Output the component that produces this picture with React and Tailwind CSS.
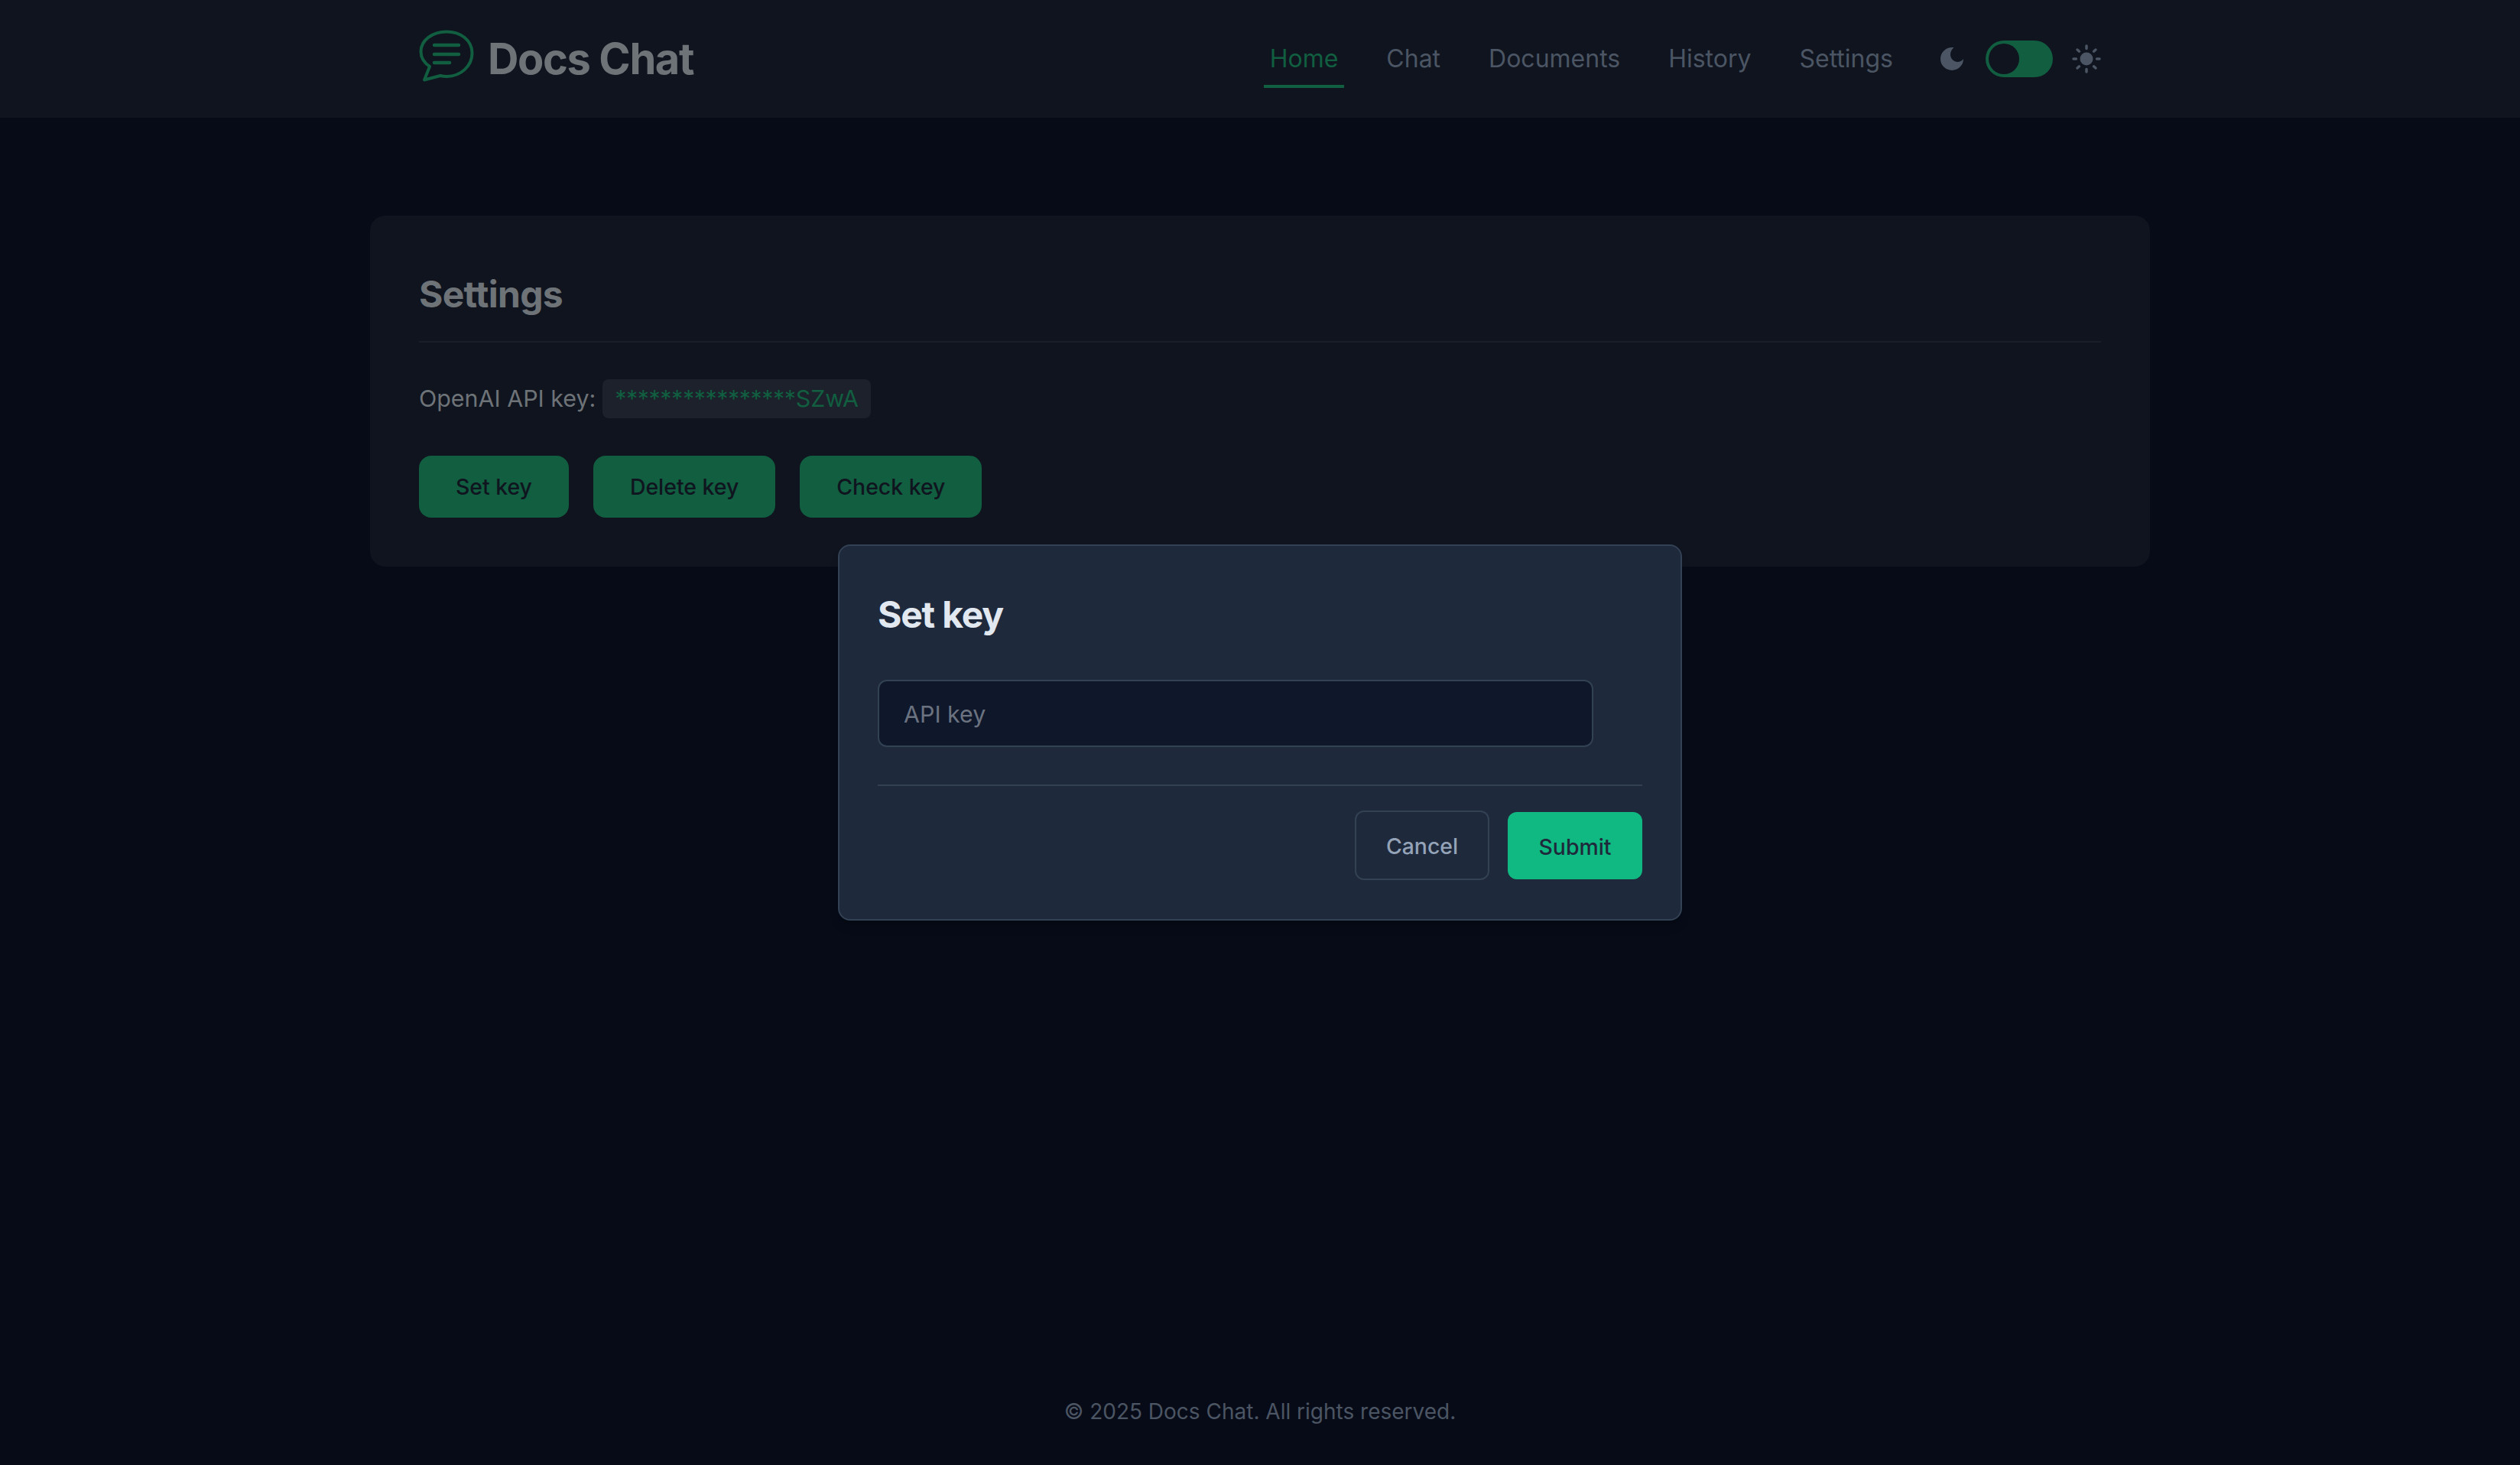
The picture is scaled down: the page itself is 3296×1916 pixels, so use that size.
import React from "react";

const Logo = () => (
  <svg width="72" height="68" viewBox="0 0 72 68" fill="none" stroke="#115e40" strokeLinecap="round" strokeLinejoin="round">
    <path strokeWidth="4" d="M36 2.500C17.500 2.500 2.500 13.500 2.500 28.500c0 8 4 14.500 11.500 19.500L7 65.500l21-5.500c2.500.6 5.500.900 8.500.900C55 60.900 69.500 47 69.500 30.500 69.500 14 55 2.500 36 2.500Z" />
    <path strokeWidth="4.500" d="M20 20h32M20 32h32M20 43h20" />
  </svg>
);

const Moon = () => (
  <svg width="30" height="30" viewBox="0 0 30 30" fill="#4b5563">
    <path d="M15 0a15 15 0 1 0 15 15c-1.800 2.600-4.600 4-7.500 4C17.500 19 13 14.500 13 9.500 13 5.800 14.800 2 17.500.2 16.700.1 15.800 0 15 0Z" />
  </svg>
);

const Sun = () => (
  <svg width="38" height="38" viewBox="0 0 38 38" fill="#4b5563" stroke="#4b5563" strokeLinecap="round">
    <circle cx="19" cy="19" r="8.500" stroke="none" />
    <path strokeWidth="3.500" fill="none" d="M19 2v3.500M19 32.500V36M2 19h3.500M32.500 19H36M7 7l2.500 2.200M28.500 28.800 31 31M7 31l2.500-2.200M28.500 9.200 31 7" />
  </svg>
);

const navItems = ["Home", "Chat", "Documents", "History", "Settings"];

export default function App() {
  return (
    <div className="relative flex h-[1916px] flex-col bg-[#070b17] font-['Inter',sans-serif] text-[#6e7378]">
      <header className="flex h-[154px] shrink-0 items-center justify-center bg-[#0f141f]">
        <div className="flex w-[2200px] items-center justify-between">
          <div className="flex items-center gap-[18px]">
            <div className="mb-2">
              <Logo />
            </div>
            <span className="text-[56px] font-bold leading-none tracking-tight text-[#6e7378]">Docs Chat</span>
          </div>
          <div className="flex items-center">
            <nav className="flex items-center gap-[47px]">
              {navItems.map((item, i) => (
                <a
                  key={item}
                  className={
                    i === 0
                      ? "border-b-4 border-[#115e40] px-2 pb-2.5 pt-3.5 text-[32px] leading-[48px] text-[#115e40]"
                      : "border-b-4 border-transparent px-2 pb-2.5 pt-3.5 text-[32px] leading-[48px] text-[#4b5563]"
                  }
                >
                  {item}
                </a>
              ))}
            </nav>
            <div className="ml-[54px] flex items-center">
              <Moon />
              <div className="ml-[29px] flex h-12 w-[88px] items-center rounded-full bg-[#115e40] pl-1">
                <div className="h-10 w-10 rounded-full bg-[#0f141f]" />
              </div>
              <div className="ml-[25px]">
                <Sun />
              </div>
            </div>
          </div>
        </div>
      </header>

      <main className="flex flex-1 flex-col items-center pt-[128px]">
        <section className="w-[2328px] rounded-[20px] bg-[#0f141f] p-16">
          <h1 className="border-b-2 border-[#1a1f29] pb-[23px] pt-px text-[48px] font-bold leading-[76px] tracking-[-0.7px] text-[#6e7378]">Settings</h1>
          <div className="mt-12 flex items-center gap-[9px] text-[30.4px] leading-[51px]">
            <span>OpenAI API key:</span>
            <code className="rounded-lg bg-[#1c212b] px-4 font-['Inter',sans-serif] text-[#115e40]">
              <span className="tracking-[-0.45px]">****************</span>SZwA
            </code>
          </div>
          <div className="mt-[49px] flex gap-8">
            {["Set key", "Delete key", "Check key"].map((b) => (
              <button key={b} className="h-[81px] rounded-2xl bg-[#115e40] px-12 pt-0.5 text-[28.4px] font-medium text-[#0f141f]">
                {b}
              </button>
            ))}
          </div>
        </section>
      </main>

      <footer className="flex h-[142px] shrink-0 items-center justify-center pt-0.5 text-[28px] text-[#4b5563]">
        © 2025 Docs Chat. All rights reserved.
      </footer>

      <div className="absolute left-[1096px] top-[712px] w-[1104px] rounded-2xl border-2 border-[#334155] bg-[#1e293b] px-[50px] pb-[50px] pt-[54px] shadow-lg">
        <h2 className="text-[48px] font-bold leading-[72px] tracking-tight text-[#e2e8f0]">Set key</h2>
        <div className="mt-[49px] flex h-[88px] w-[936px] items-center rounded-xl border-2 border-[#334155] bg-[#0f172a] px-8 pt-1 text-[30.4px] text-[#6b7280]">
          API key
        </div>
        <div className="mt-[49px] h-0.5 bg-[#334155]" />
        <div className="mt-8 flex justify-end gap-6">
          <button className="h-[91px] w-[176px] rounded-xl border-2 border-[#334155] pt-1 text-[28.4px] font-medium text-[#94a3b8]">Cancel</button>
          <button className="my-0.5 h-[88px] w-[176px] rounded-xl bg-[#10b981] pt-1 text-[28.4px] font-medium text-[#1e293b]">Submit</button>
        </div>
      </div>
    </div>
  );
}
